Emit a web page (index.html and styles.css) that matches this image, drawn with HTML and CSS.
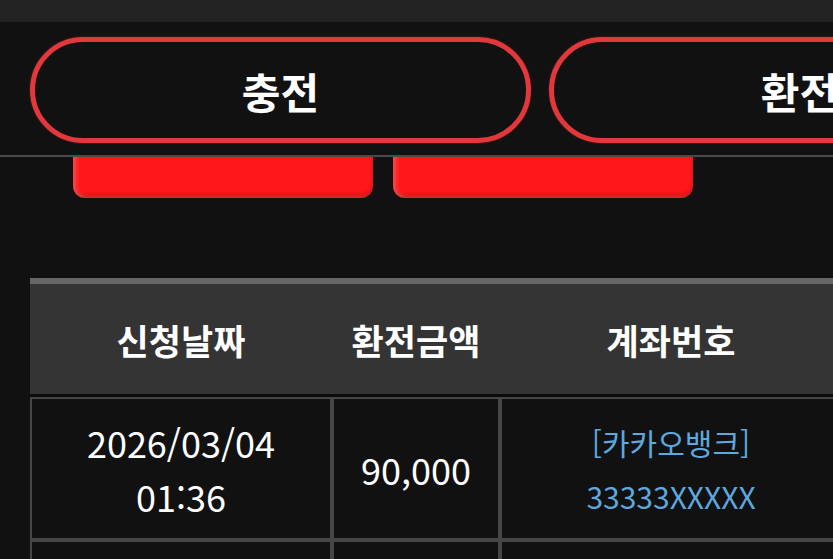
FILE: index.html
```html
<!DOCTYPE html>
<html lang="ko">

<head>
    <meta charset="UTF-8">
    <meta name="viewport" content="width=device-width, initial-scale=1.0">
    <link rel="stylesheet" href="styles.css">
</head>

<body>
    <div class="topbar"></div>

    <div class="tabs">
        <div class="tab">충전</div>
        <div class="tab">환전</div>
    </div>

    <div class="actions">
        <button class="btn-red" type="button">환전신청</button>
        <button class="btn-red" type="button">내역삭제</button>
    </div>

    <div class="history">
        <table class="list">
            <thead>
                <tr>
                    <th class="col-date">신청날짜</th>
                    <th class="col-amount">환전금액</th>
                    <th class="col-account">계좌번호</th>
                    <th class="col-state">상태</th>
                </tr>
            </thead>
            <tbody>
                <tr>
                    <td>2026/03/04<br>01:36</td>
                    <td>90,000</td>
                    <td class="account">[카카오뱅크]<br>33333XXXXX</td>
                    <td>대기</td>
                </tr>
                <tr>
                    <td>2026/03/02<br>22:10</td>
                    <td>50,000</td>
                    <td class="account">[카카오뱅크]<br>33333XXXXX</td>
                    <td>완료</td>
                </tr>
            </tbody>
        </table>
    </div>
</body>
</html>
```

FILE: styles.css
```css
html, body {
    margin: 0;
    padding: 0;
    background-color: #121112;
    overflow: hidden;
    font-family: "Noto Sans CJK KR", "Noto Sans", sans-serif;
    color: #ffffff;
}

.topbar {
    height: 22px;
    background-color: #232323;
}

/* tab bar sits over the top of the red buttons */
.tabs {
    position: relative;
    z-index: 1;
    display: flex;
    gap: 18px;
    height: 135px;
    padding-left: 30px;
    box-sizing: border-box;
    padding-top: 15px;
    background-color: #121112;
    border-bottom: 2px solid #4a4a4a;
    overflow: hidden;
}

.tab {
    flex-shrink: 0;
    width: 501px;
    height: 106px;
    box-sizing: border-box;
    border: 5px solid #e2383b;
    border-radius: 53px;
    box-shadow: 0 0 2px rgba(226, 56, 59, 0.5);
    display: flex;
    align-items: center;
    justify-content: center;
    font-size: 42px;
    font-weight: bold;
}

.actions {
    display: flex;
    align-items: flex-start;
    gap: 20px;
    padding-left: 73px;
    margin-top: -59px;
}

.btn-red {
    width: 300px;
    height: 100px;
    padding: 0 0 50px;
    border: none;
    border-radius: 12px;
    background-color: #ff1719;
    box-shadow: inset 3px 0 4px rgba(255, 255, 255, 0.25), inset 0 -3px 4px rgba(0, 0, 0, 0.2);
    color: #ffffff;
    font-family: inherit;
    font-size: 24px;
}

.history {
    margin-top: 80px;
    padding-left: 30px;
}

.list {
    border-collapse: separate;
    border-spacing: 0;
    width: 1000px;
}

.list th {
    height: 108px;
    background-color: #353435;
    border-top: 6px solid #666666;
    border-bottom: 3px solid #0a0a0a;
    font-size: 35px;
    font-weight: bold;
}

.col-date { width: 300px; }
.col-amount { width: 166px; }
.col-account { width: 340px; }

.list td {
    height: 139px;
    border: 2px solid #464646;
    text-align: center;
    font-size: 36px;
    line-height: 54px;
    padding: 0;
}

.list td.account {
    color: #5da8de;
    font-size: 30px;
}
```
